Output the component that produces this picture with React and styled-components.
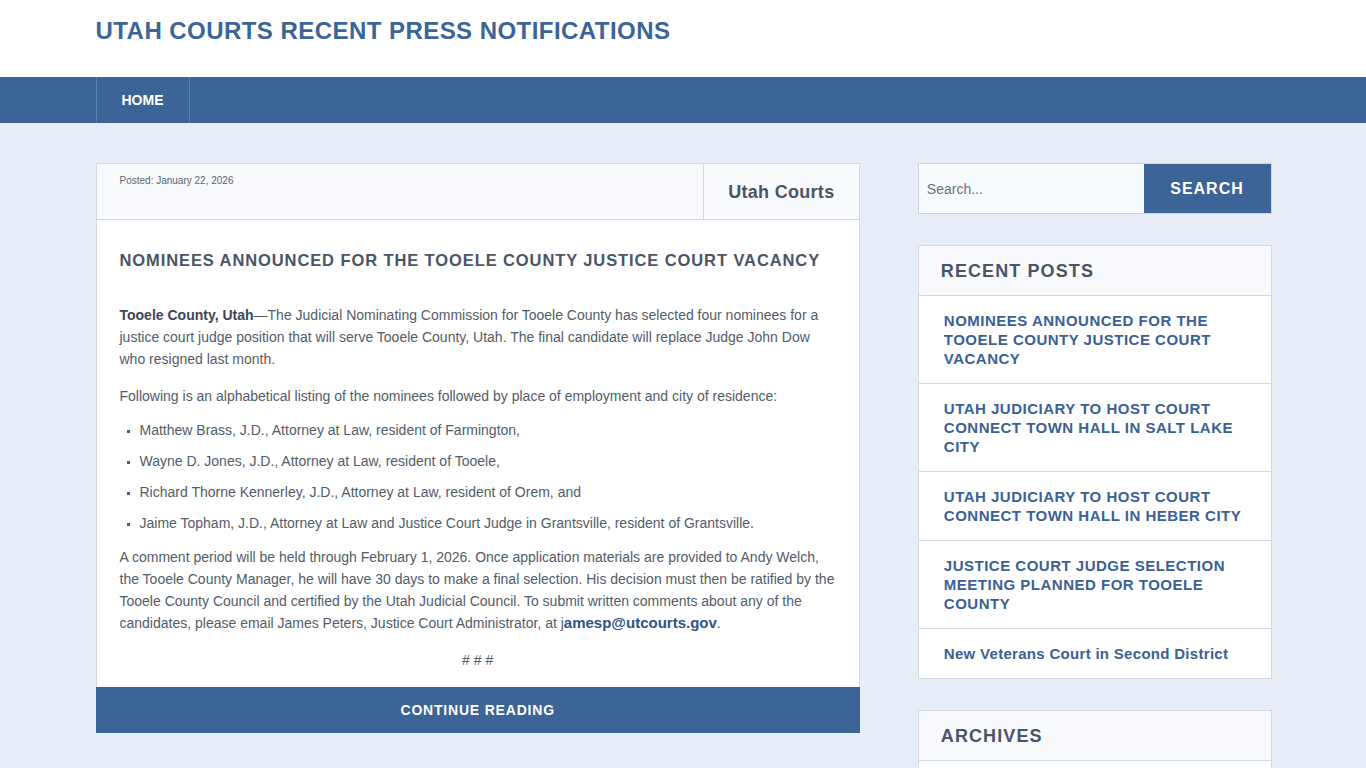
import React from "react";
import styled, { createGlobalStyle } from "styled-components";

const GlobalStyle = createGlobalStyle`
  html, body { margin: 0; padding: 0; }
  body {
    background: #e6edf7;
    font-family: "Liberation Sans", Arial, sans-serif;
    color: #525c69;
  }
  * { box-sizing: border-box; }
`;

const Header = styled.header`
  background: #fff;
  height: 77px;
`;

const Container = styled.div`
  width: 1177px;
  margin: 0 auto;
  padding-left: 1px;
`;

const SiteTitle = styled.h1`
  margin: 0;
  padding-top: 18px;
  font-size: 24px;
  font-weight: 700;
  text-transform: uppercase;
  color: #3b6497;
  letter-spacing: 0.45px;
  line-height: 26px;
`;

const NavBar = styled.nav`
  background: #3c6497;
  height: 46px;
`;

const NavList = styled.ul`
  list-style: none;
  margin: 0;
  padding: 0;
  display: flex;
  height: 46px;
`;

const NavItem = styled.li`
  border-left: 1px solid #5b80b0;
  border-right: 1px solid #5b80b0;
  padding: 0 25px;
  display: flex;
  align-items: center;
  color: #fff;
  font-weight: 700;
  font-size: 14px;
  text-transform: uppercase;
  width: 94px;
`;

const Main = styled.div`
  display: flex;
  gap: 58px;
  padding-top: 40px;
  align-items: flex-start;
`;

const Article = styled.article`
  width: 765px;
  border: 1px solid #d0d8e2;
  background: #fff;
`;

const MetaRow = styled.div`
  display: flex;
  height: 56px;
  background: #f8fafd;
  border-bottom: 1px solid #d0d8e2;
`;

const Posted = styled.div`
  flex: 1;
  font-size: 10px;
  color: #5a6470;
  padding: 11px 0 0 23px;
`;

const Author = styled.div`
  width: 156px;
  border-left: 1px solid #d0d8e2;
  display: flex;
  align-items: center;
  justify-content: center;
  font-size: 18px;
  font-weight: 700;
  letter-spacing: 0.3px;
  color: #4a5466;
  padding-top: 2px;
`;

const Body = styled.div`
  padding: 30px 23px 16px 23px;
`;

const PostTitle = styled.h2`
  margin: 0 0 34px;
  font-size: 16.5px;
  font-weight: 700;
  text-transform: uppercase;
  color: #4a5568;
  letter-spacing: 0.9px;
  line-height: 20px;
`;

const P = styled.p`
  margin: 0 0 15px;
  font-size: 14px;
  line-height: 22px;
  color: #525c69;
`;

const Strong = styled.strong`
  color: #3c4656;
`;

const Link = styled.a`
  color: #2f5288;
  font-weight: 700;
  font-size: 15px;
  text-decoration: none;
`;

const List = styled.ul`
  margin: -3px 0 12px;
  padding-left: 20px;
  list-style: square;
`;

const Li = styled.li`
  font-size: 14px;
  line-height: 22px;
  margin-bottom: 9px;
  color: #525c69;
  &::marker { font-size: 10px; }
`;

const Centered = styled.p`
  margin: 10px 0 0;
  text-align: center;
  font-size: 14px;
  line-height: 22px;
  color: #525c69;
`;

const ContinueButton = styled.div`
  background: #3c6497;
  height: 46px;
  margin: 0 -1px -1px;
  display: flex;
  align-items: center;
  justify-content: center;
  color: #fff;
  font-size: 14px;
  font-weight: 700;
  letter-spacing: 0.8px;
  text-transform: uppercase;
`;

const Sidebar = styled.aside`
  width: 354px;
  display: flex;
  flex-direction: column;
  gap: 31px;
`;

const SearchForm = styled.div`
  display: flex;
  height: 51px;
  border: 1px solid #cbd3de;
  background: #f8fbfe;
`;

const SearchInput = styled.div`
  flex: 1;
  display: flex;
  align-items: center;
  padding-left: 8px;
  font-size: 14px;
  color: #6a717a;
`;

const SearchButton = styled.div`
  width: 127px;
  background: #3c6497;
  color: #fff;
  font-weight: 700;
  font-size: 16px;
  letter-spacing: 1px;
  display: flex;
  align-items: center;
  justify-content: center;
`;

const Widget = styled.section`
  border: 1px solid #d0d8e2;
  background: #fff;
`;

const WidgetTitle = styled.h3`
  margin: 0;
  height: 50px;
  background: #f8fafd;
  border-bottom: 1px solid #d0d8e2;
  display: flex;
  align-items: center;
  padding-left: 22px;
  padding-top: 1px;
  font-size: 18px;
  font-weight: 700;
  letter-spacing: 1.1px;
  text-transform: uppercase;
  color: #4a5466;
`;

const PostList = styled.ul`
  list-style: none;
  margin: 0;
  padding: 0;
`;

const PostItem = styled.li`
  padding: 15px 18px 15px 25px;
  border-top: 1px solid #d0d8e2;
  &:first-child { border-top: none; }
`;

const PostLink = styled.a`
  display: block;
  color: #3b6094;
  font-weight: 700;
  font-size: 15px;
  line-height: 19px;
  letter-spacing: ${(p) => (p.$upper ? "0.5px" : "0.3px")};
  text-transform: ${(p) => (p.$upper ? "uppercase" : "none")};
  text-decoration: none;
`;

const EmptyBody = styled.div`
  height: 20px;
`;

const recent = [
  { t: "Nominees Announced for the Tooele County Justice Court Vacancy", u: true },
  { t: "Utah Judiciary to Host Court Connect Town Hall in Salt Lake City", u: true },
  { t: "Utah Judiciary to Host Court Connect Town Hall in Heber City", u: true },
  { t: "Justice Court Judge Selection Meeting Planned for Tooele County", u: true },
  { t: "New Veterans Court in Second District", u: false },
];

const nominees = [
  "Matthew Brass, J.D., Attorney at Law, resident of Farmington,",
  "Wayne D. Jones, J.D., Attorney at Law, resident of Tooele,",
  "Richard Thorne Kennerley, J.D., Attorney at Law, resident of Orem, and",
  "Jaime Topham, J.D., Attorney at Law and Justice Court Judge in Grantsville, resident of Grantsville.",
];

export default function App() {
  return (
    <>
      <GlobalStyle />
      <Header>
        <Container>
          <SiteTitle>Utah Courts Recent Press Notifications</SiteTitle>
        </Container>
      </Header>
      <NavBar>
        <Container>
          <NavList>
            <NavItem>Home</NavItem>
          </NavList>
        </Container>
      </NavBar>
      <Container>
        <Main>
          <Article>
            <MetaRow>
              <Posted>Posted: January 22, 2026</Posted>
              <Author>Utah Courts</Author>
            </MetaRow>
            <Body>
              <PostTitle>Nominees Announced for the Tooele County Justice Court Vacancy</PostTitle>
              <P>
                <Strong>Tooele County, Utah</Strong>—The Judicial Nominating Commission for Tooele County has selected four nominees for a justice court judge position that will serve Tooele County, Utah. The final candidate will replace Judge John Dow who resigned last month.
              </P>
              <P>Following is an alphabetical listing of the nominees followed by place of employment and city of residence:</P>
              <List>
                {nominees.map((n) => (
                  <Li key={n}>{n}</Li>
                ))}
              </List>
              <P>
                A comment period will be held through February 1, 2026. Once application materials are provided to Andy Welch, the Tooele County Manager, he will have 30 days to make a final selection. His decision must then be ratified by the Tooele County Council and certified by the Utah Judicial Council. To submit written comments about any of the candidates, please email James Peters, Justice Court Administrator, at j<Link>amesp@utcourts.gov</Link>.
              </P>
              <Centered># # #</Centered>
            </Body>
            <ContinueButton>Continue Reading</ContinueButton>
          </Article>
          <Sidebar>
            <SearchForm>
              <SearchInput>Search...</SearchInput>
              <SearchButton>SEARCH</SearchButton>
            </SearchForm>
            <Widget>
              <WidgetTitle>Recent Posts</WidgetTitle>
              <PostList>
                {recent.map((r) => (
                  <PostItem key={r.t}>
                    <PostLink $upper={r.u}>{r.t}</PostLink>
                  </PostItem>
                ))}
              </PostList>
            </Widget>
            <Widget>
              <WidgetTitle>Archives</WidgetTitle>
              <EmptyBody />
            </Widget>
          </Sidebar>
        </Main>
      </Container>
    </>
  );
}
